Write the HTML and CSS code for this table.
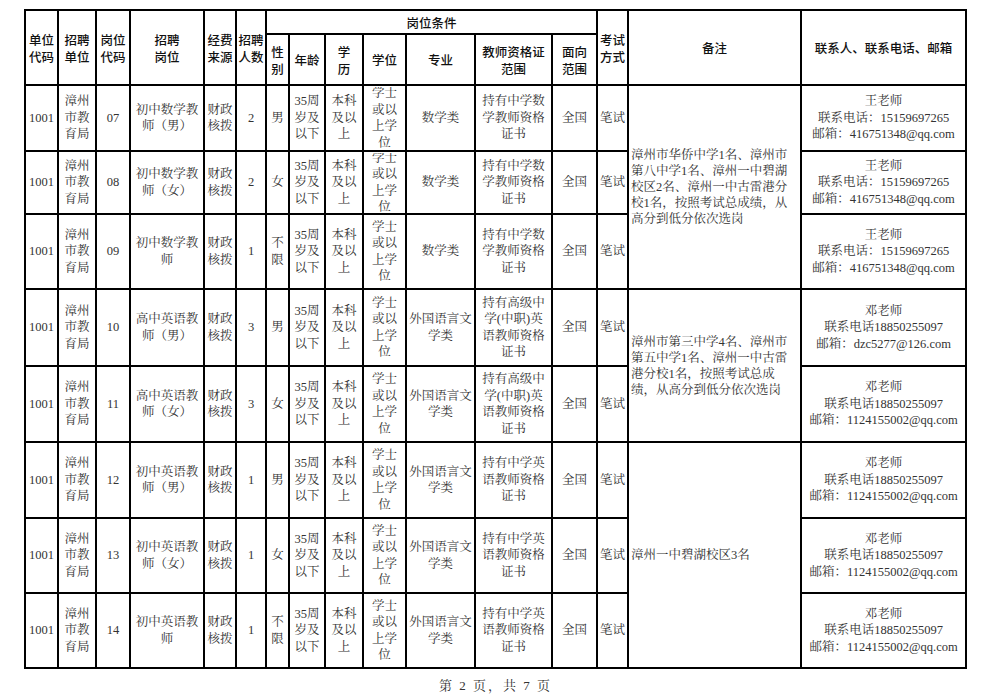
FILE: index.html
```html
<!DOCTYPE html>
<html lang="zh-CN">
<head>
<meta charset="utf-8">
<title>岗位表</title>
<link rel="stylesheet" href="styles.css">
</head>
<body>
<div class="page">
<table class="jobs">
  <colgroup>
    <col class="c33"><col class="c38"><col class="c34"><col class="c74"><col class="c32"><col class="c30"><col class="c23"><col class="c36"><col class="c38"><col class="c43"><col class="c69"><col class="c77"><col class="c45"><col class="c31"><col class="c173"><col class="c165">
  </colgroup>
  <thead>
    <tr class="h1">
      <th rowspan="2">单位<br>代码</th>
      <th rowspan="2">招聘<br>单位</th>
      <th rowspan="2">岗位<br>代码</th>
      <th rowspan="2">招聘<br>岗位</th>
      <th rowspan="2">经费<br>来源</th>
      <th rowspan="2">招聘<br>人数</th>
      <th colspan="7">岗位条件</th>
      <th rowspan="2">考试<br>方式</th>
      <th rowspan="2">备注</th>
      <th rowspan="2">联系人、联系电话、邮箱</th>
    </tr>
    <tr class="h2">
      <th>性<br>别</th>
      <th>年龄</th>
      <th>学<br>历</th>
      <th>学位</th>
      <th>专业</th>
      <th>教师资格证<br>范围</th>
      <th>面向<br>范围</th>
    </tr>
  </thead>
  <tbody>
    <tr class="r66">
      <td>1001</td><td>漳州<br>市教<br>育局</td><td>07</td><td>初中数学教<br>师（男）</td><td>财政<br>核拨</td><td>2</td><td>男</td><td>35周<br>岁及<br>以下</td><td>本科<br>及以<br>上</td><td class="deg"><div class="clip c62">学士<br>或以<br>上学<br>位</div></td><td>数学类</td><td>持有中学数<br>学教师资格<br>证书</td><td>全国</td><td>笔试</td>
      <td rowspan="3" class="note">漳州市华侨中学1名、漳州市第八中学1名、漳州一中碧湖校区2名、漳州一中古雷港分校1名，按照考试总成绩，从高分到低分依次选岗</td>
      <td>王老师<br>联系电话：15159697265<br>邮箱：416751348@qq.com</td>
    </tr>
    <tr class="r63">
      <td>1001</td><td>漳州<br>市教<br>育局</td><td>08</td><td>初中数学教<br>师（女）</td><td>财政<br>核拨</td><td>2</td><td>女</td><td>35周<br>岁及<br>以下</td><td>本科<br>及以<br>上</td><td class="deg"><div class="clip c60">学士<br>或以<br>上学<br>位</div></td><td>数学类</td><td>持有中学数<br>学教师资格<br>证书</td><td>全国</td><td>笔试</td>
      <td>王老师<br>联系电话：15159697265<br>邮箱：416751348@qq.com</td>
    </tr>
    <tr class="r75">
      <td>1001</td><td>漳州<br>市教<br>育局</td><td>09</td><td>初中数学教<br>师</td><td>财政<br>核拨</td><td>1</td><td>不<br>限</td><td>35周<br>岁及<br>以下</td><td>本科<br>及以<br>上</td><td class="deg">学士<br>或以<br>上学<br>位</td><td>数学类</td><td>持有中学数<br>学教师资格<br>证书</td><td>全国</td><td>笔试</td>
      <td>王老师<br>联系电话：15159697265<br>邮箱：416751348@qq.com</td>
    </tr>
    <tr class="r77">
      <td>1001</td><td>漳州<br>市教<br>育局</td><td>10</td><td>高中英语教<br>师（男）</td><td>财政<br>核拨</td><td>3</td><td>男</td><td>35周<br>岁及<br>以下</td><td>本科<br>及以<br>上</td><td class="deg">学士<br>或以<br>上学<br>位</td><td>外国语言文<br>学类</td><td>持有高级中<br>学(中职)英<br>语教师资格<br>证书</td><td>全国</td><td>笔试</td>
      <td rowspan="2" class="note">漳州市第三中学4名、漳州市第五中学1名、漳州一中古雷港分校1名，按照考试总成绩，从高分到低分依次选岗</td>
      <td>邓老师<br>联系电话18850255097<br>邮箱：dzc5277@126.com</td>
    </tr>
    <tr class="r76">
      <td>1001</td><td>漳州<br>市教<br>育局</td><td>11</td><td>高中英语教<br>师（女）</td><td>财政<br>核拨</td><td>3</td><td>女</td><td>35周<br>岁及<br>以下</td><td>本科<br>及以<br>上</td><td class="deg">学士<br>或以<br>上学<br>位</td><td>外国语言文<br>学类</td><td>持有高级中<br>学(中职)英<br>语教师资格<br>证书</td><td>全国</td><td>笔试</td>
      <td>邓老师<br>联系电话18850255097<br>邮箱：1124155002@qq.com</td>
    </tr>
    <tr class="r76">
      <td>1001</td><td>漳州<br>市教<br>育局</td><td>12</td><td>初中英语教<br>师（男）</td><td>财政<br>核拨</td><td>1</td><td>男</td><td>35周<br>岁及<br>以下</td><td>本科<br>及以<br>上</td><td class="deg">学士<br>或以<br>上学<br>位</td><td>外国语言文<br>学类</td><td>持有中学英<br>语教师资格<br>证书</td><td>全国</td><td>笔试</td>
      <td rowspan="3" class="note">漳州一中碧湖校区3名</td>
      <td>邓老师<br>联系电话18850255097<br>邮箱：1124155002@qq.com</td>
    </tr>
    <tr class="r75">
      <td>1001</td><td>漳州<br>市教<br>育局</td><td>13</td><td>初中英语教<br>师（女）</td><td>财政<br>核拨</td><td>1</td><td>女</td><td>35周<br>岁及<br>以下</td><td>本科<br>及以<br>上</td><td class="deg">学士<br>或以<br>上学<br>位</td><td>外国语言文<br>学类</td><td>持有中学英<br>语教师资格<br>证书</td><td>全国</td><td>笔试</td>
      <td>邓老师<br>联系电话18850255097<br>邮箱：1124155002@qq.com</td>
    </tr>
    <tr class="r75">
      <td>1001</td><td>漳州<br>市教<br>育局</td><td>14</td><td>初中英语教<br>师</td><td>财政<br>核拨</td><td>1</td><td>不<br>限</td><td>35周<br>岁及<br>以下</td><td>本科<br>及以<br>上</td><td class="deg">学士<br>或以<br>上学<br>位</td><td>外国语言文<br>学类</td><td>持有中学英<br>语教师资格<br>证书</td><td>全国</td><td>笔试</td>
      <td>邓老师<br>联系电话18850255097<br>邮箱：1124155002@qq.com</td>
    </tr>
  </tbody>
</table>
<div class="footer">第 2 页，共 7 页</div>
</div>
</body>
</html>
```
FILE: styles.css
```css
html, body {
  margin: 0;
  padding: 0;
  background: #ffffff;
}
.page {
  padding: 9px 0 0 24px;
  width: 944px;
}
.jobs {
  border-collapse: collapse;
  table-layout: fixed;
  width: 943px;
  font-family: "Liberation Serif", "Noto Serif CJK SC", "Noto Sans CJK SC", serif;
  font-size: 12.5px;
  line-height: 16.5px;
  color: #333333;
}
.jobs th, .jobs td {
  border: 2px solid #000000;
  padding: 0 1px;
  text-align: center;
  vertical-align: middle;
  overflow: hidden;
}
.jobs th {
  font-family: "Noto Sans CJK SC", sans-serif;
  font-weight: 500;
  color: #111111;
  line-height: 17px;
  padding: 0;
}
.c33 { width: 33px; }
.c38 { width: 38px; }
.c34 { width: 34px; }
.c74 { width: 74px; }
.c32 { width: 32px; }
.c30 { width: 30px; }
.c23 { width: 23px; }
.c36 { width: 36px; }
.c43 { width: 43px; }
.c69 { width: 69px; }
.c77 { width: 77px; }
.c45 { width: 45px; }
.c31 { width: 31px; }
.c173 { width: 173px; }
.c165 { width: 165px; }
.h1 { height: 24px; }
.h2 { height: 51px; }
.r66 { height: 66px; }
.r63 { height: 63px; }
.r75 { height: 75px; }
.r76 { height: 76px; }
.r77 { height: 77px; }
.jobs td.deg {
  padding: 0 3px;
}
.clip {
  display: flex;
  align-items: center;
  justify-content: center;
  overflow: hidden;
}
.c62 { height: 62px; }
.c60 { height: 60px; }
.jobs td.note {
  text-align: left;
  padding: 0 2px;
  line-height: 16px;
}
.footer {
  width: 943px;
  text-align: center;
  margin-top: 6px;
  font-family: "Liberation Serif", "Noto Serif CJK SC", "Noto Sans CJK SC", serif;
  font-size: 13px;
  color: #333333;
  letter-spacing: 2px;
}
```
